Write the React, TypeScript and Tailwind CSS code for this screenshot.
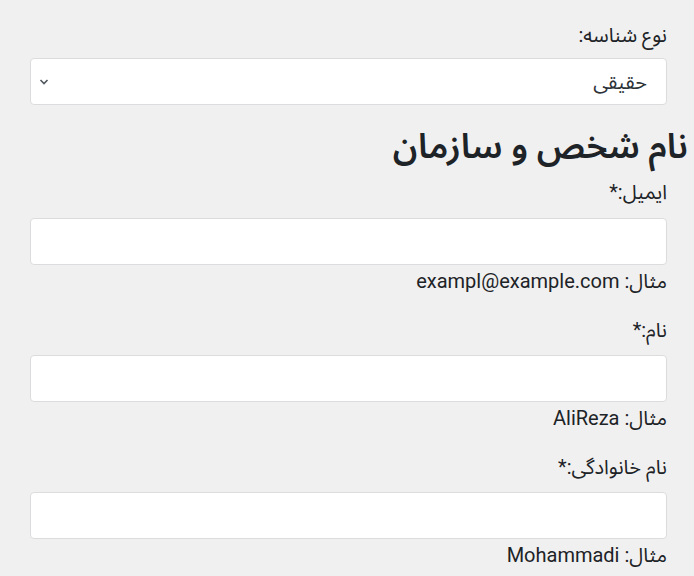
import React from "react";

const font = { fontFamily: 'Roboto, "Noto Sans Arabic", "DejaVu Sans", sans-serif' };

function Field({ label, hint, first }: { label: string; hint: string; first?: boolean }) {
  return (
    <div className={first ? "flex flex-col" : "mt-[21px] flex flex-col"}>
      <label className="h-[28px] text-[20px] leading-[28px] text-[#1d2327]">{label}</label>
      <input
        dir="rtl"
        className={(first ? "mt-[12px] " : "mt-[11px] ") + "h-[47px] w-full rounded-[4px] border border-[#dcdcde] bg-white px-3 outline-none"}
      />
      <div className="mt-[2px] h-[28px] text-[20px] leading-[28px] text-[#1d2327]">
        مثال: <span dir="ltr">{hint}</span>
      </div>
    </div>
  );
}

export default function App() {
  return (
    <div dir="rtl" style={font} className="min-h-[576px] w-[694px] bg-[#f0f0f0] pr-[6px] pt-[21px]">
      <div className="mr-[21px] ml-[30px] flex flex-col">
        <label className="h-[28px] text-[20px] leading-[28px] text-[#1d2327]">نوع شناسه:</label>
        <div className="relative mt-[9px] h-[47px] rounded-[4px] border border-[#dcdcde] bg-white">
          <div className="absolute right-[19px] top-0 flex h-full items-center text-[20px] text-[#2c3338]">حقیقی</div>
          <svg className="absolute left-[8px] top-[19px]" width="10" height="8" viewBox="0 0 10 8">
            <path d="M1.5 2 L5 5.5 L8.5 2" fill="none" stroke="#50575e" strokeWidth="1.6" />
          </svg>
        </div>
      </div>
      <h1 className="mt-[20px] h-[44px] text-[35px] font-semibold leading-[44px] text-[#1d2327]">نام شخص و سازمان</h1>
      <div className="mt-[9px] mr-[21px] ml-[30px] flex flex-col">
        <Field first label="ایمیل:*" hint="exampl@example.com" />
        <Field label="نام:*" hint="AliReza" />
        <Field label="نام خانوادگی:*" hint="Mohammadi" />
      </div>
    </div>
  );
}
